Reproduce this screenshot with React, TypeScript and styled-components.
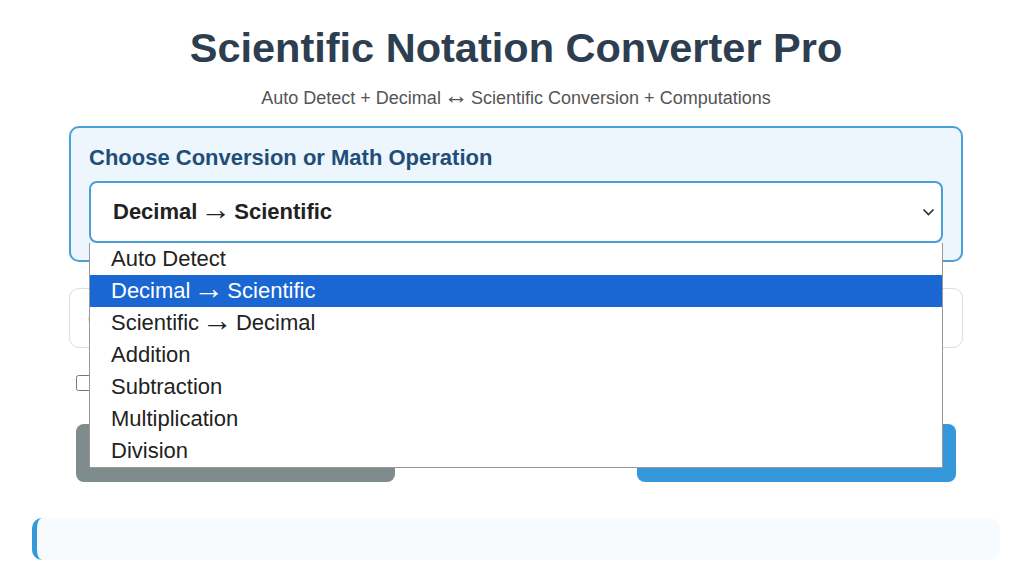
import React, { useState } from "react";
import styled, { createGlobalStyle } from "styled-components";

const GlobalStyle = createGlobalStyle`
  html, body {
    margin: 0;
    padding: 0;
    background: #ffffff;
    font-family: "Liberation Sans", Arial, sans-serif;
  }
`;

const OPTIONS: [string, string?][] = [
  ["Auto Detect"],
  ["Decimal", "Scientific"],
  ["Scientific", "Decimal"],
  ["Addition"],
  ["Subtraction"],
  ["Multiplication"],
  ["Division"],
];

function OptionText({ parts }: { parts: [string, string?] }) {
  if (!parts[1]) return <>{parts[0]}</>;
  return (
    <>
      {parts[0]} <StyledArrow>→</StyledArrow> {parts[1]}
    </>
  );
}

export default function App() {
  const [mode, setMode] = useState(1);

  return (
    <>
      <GlobalStyle />
      <StyledPage>
        <StyledInner>
          <StyledTitle>Scientific Notation Converter Pro</StyledTitle>
          <StyledSubtitle>
            Auto Detect + Decimal <StyledArrow>↔</StyledArrow> Scientific Conversion + Computations
          </StyledSubtitle>

          <StyledPanel>
            <StyledLabel>Choose Conversion or Math Operation</StyledLabel>
            <StyledSelectWrap>
              <StyledSelect>
                <span>
                  <OptionText parts={OPTIONS[mode]} />
                </span>
                <svg width="13" height="8" viewBox="0 0 13 8">
                  <path d="M1.5 1.5 L6.5 6.5 L11.5 1.5" fill="none" stroke="#333" strokeWidth="1.7" />
                </svg>
              </StyledSelect>
              <StyledMenu>
                {OPTIONS.map((opt, i) => (
                  <StyledOption key={opt[0]} $active={i === mode} onClick={() => setMode(i)}>
                    <OptionText parts={opt} />
                  </StyledOption>
                ))}
              </StyledMenu>
            </StyledSelectWrap>
          </StyledPanel>

          <StyledInput placeholder="e.g. 0.000123 or 1.23e-4" />

          <StyledCheckRow>
            <input type="checkbox" aria-label="Show steps" />
          </StyledCheckRow>

          <StyledButtons>
            <StyledButton $color="#7f8c8d" aria-label="Clear" />
            <StyledButton $color="#3498db" aria-label="Convert" />
          </StyledButtons>
        </StyledInner>

        <StyledResult />
      </StyledPage>
    </>
  );
}

const StyledPage = styled.div`
  width: 968px;
  margin-left: 32px;
  padding-top: 24px;
`;

const StyledInner = styled.div`
  margin: 0 37px;
`;

const StyledTitle = styled.h1`
  margin: 0;
  font-size: 41.5px;
  line-height: 48px;
  font-weight: 700;
  text-align: center;
  color: #2c3e50;
`;

const StyledSubtitle = styled.p`
  margin: 15px 0 0;
  height: 21px;
  font-size: 18px;
  line-height: 21px;
  text-align: center;
  color: #555;
`;

const StyledArrow = styled.span`
  display: inline-block;
  font-family: "Liberation Sans", sans-serif;
  font-weight: 400;
  font-size: 1.4em;
  line-height: 0.7;
  margin: 0 -0.1em;
  vertical-align: -0.02em;
`;

const StyledPanel = styled.div`
  margin-top: 18px;
  padding: 17px 18px;
  border: 2px solid #4a9fd8;
  border-radius: 10px;
  background: #eef6fd;
`;

const StyledLabel = styled.div`
  font-size: 22px;
  line-height: 25px;
  font-weight: 700;
  color: #1f4e79;
  margin-bottom: 11px;
`;

const StyledSelectWrap = styled.div`
  position: relative;
`;

const StyledSelect = styled.div`
  display: flex;
  align-items: center;
  justify-content: space-between;
  height: 62px;
  box-sizing: border-box;
  padding: 0 6px 0 22px;
  border: 2px solid #4a9fd8;
  border-radius: 8px;
  background: #fff;
  font-size: 22px;
  font-weight: 700;
  color: #222;
`;

const StyledMenu = styled.ul`
  position: absolute;
  top: 100%;
  left: 0;
  right: 0;
  z-index: 10;
  margin: 0;
  padding: 0;
  list-style: none;
  background: #fff;
  border: 1px solid #999;
  border-top: none;
`;

const StyledOption = styled.li<{ $active: boolean }>`
  height: 32px;
  box-sizing: border-box;
  padding: 1px 0 0 21px;
  line-height: 30px;
  font-size: 22px;
  color: ${(p) => (p.$active ? "#fff" : "#222")};
  background: ${(p) => (p.$active ? "#1a66d2" : "#fff")};
  cursor: default;
`;

const StyledInput = styled.input`
  display: block;
  width: 100%;
  box-sizing: border-box;
  height: 60px;
  margin-top: 26px;
  padding: 0 18px;
  border: 1px solid #ddd;
  border-radius: 10px;
  font-family: inherit;
  font-size: 18px;
  color: #333;
`;

const StyledCheckRow = styled.label`
  display: flex;
  align-items: center;
  margin: 27px 0 0 7px;

  & > input {
    width: 16px;
    height: 16px;
    margin: 0;
  }
`;

const StyledButtons = styled.div`
  display: flex;
  justify-content: space-between;
  margin: 33px 7px 0;
`;

const StyledButton = styled.button<{ $color: string }>`
  width: 319px;
  height: 58px;
  border: none;
  border-radius: 8px;
  background: ${(p) => p.$color};
`;

const StyledResult = styled.div`
  height: 42px;
  margin-top: 36px;
  border-left: 5px solid #3498db;
  border-radius: 10px;
  background: #f7fbfe;
`;
